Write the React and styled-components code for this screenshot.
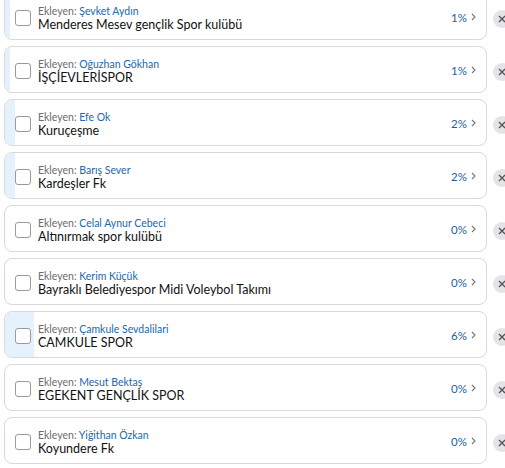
import React from "react";
import styled, { createGlobalStyle } from "styled-components";

const items = [
  { by: "Şevket Aydın", name: "Menderes Mesev gençlik Spor kulübü", pct: 1 },
  { by: "Oğuzhan Gökhan", name: "İŞÇİEVLERİSPOR", pct: 1 },
  { by: "Efe Ok", name: "Kuruçeşme", pct: 2 },
  { by: "Barış Sever", name: "Kardeşler Fk", pct: 2 },
  { by: "Celal Aynur Cebeci", name: "Altınırmak spor kulübü", pct: 0 },
  { by: "Kerim Küçük", name: "Bayraklı Belediyespor Midi Voleybol Takımı", pct: 0 },
  { by: "Çamkule Sevdalilari", name: "CAMKULE SPOR", pct: 6 },
  { by: "Mesut Bektaş", name: "EGEKENT GENÇLİK SPOR", pct: 0 },
  { by: "Yiğithan Özkan", name: "Koyundere Fk", pct: 0 },
];

const GlobalStyle = createGlobalStyle`
  html, body {
    margin: 0;
    padding: 0;
    background: #ffffff;
    overflow: hidden;
  }
  body {
    font-family: Lato, "Open Sans", sans-serif;
  }
`;

const List = styled.div`
  display: flex;
  flex-direction: column;
  gap: 6px;
  margin-top: -7px;
  padding-left: 4px;
`;

const Row = styled.div`
  display: flex;
  align-items: center;
  gap: 4px;
`;

const Card = styled.div`
  position: relative;
  flex: 0 0 483px;
  height: 47px;
  box-sizing: border-box;
  border: 1px solid #d9d9d9;
  border-radius: 8px;
  overflow: hidden;
  display: flex;
  align-items: center;
  padding: 0 10px;
  background: #fff;
`;

const Fill = styled.div`
  position: absolute;
  left: 0;
  top: 0;
  bottom: 0;
  background: #e5f1fc;
`;

const Check = styled.span`
  position: relative;
  width: 16px;
  height: 16px;
  box-sizing: border-box;
  border: 1px solid #9a9a9a;
  border-radius: 3px;
  background: #fff;
  flex: none;
  margin-top: 2px;
`;

const Info = styled.div`
  position: relative;
  display: flex;
  flex-direction: column;
  margin-left: 7px;
  margin-top: 4px;
  flex: 1;
`;

const By = styled.div`
  font-size: 10.5px;
  line-height: 11px;
  color: #6b6b6b;

  span {
    color: #2168ab;
  }
`;

const Name = styled.div`
  font-size: 12.5px;
  line-height: 15px;
  color: #111;
`;

const Pct = styled.div`
  position: relative;
  display: flex;
  align-items: center;
  gap: 4px;
  font-size: 11.5px;
  color: #1d5f9c;
  margin-top: 1px;
`;

const Remove = styled.button`
  flex: none;
  width: 18px;
  height: 18px;
  border: none;
  border-radius: 50%;
  background: #e4e4e6;
  padding: 0;
  display: flex;
  align-items: center;
  justify-content: center;
  margin-left: 2px;
  margin-top: 4px;
`;

function Chevron() {
  return (
    <svg width="5" height="8" viewBox="0 0 5 8">
      <path d="M1 1l3 3-3 3" fill="none" stroke="#777" strokeWidth="1.1" />
    </svg>
  );
}

function Cross() {
  return (
    <svg width="8" height="8" viewBox="0 0 8 8">
      <path d="M1 1l6 6M7 1L1 7" stroke="#555" strokeWidth="1.3" />
    </svg>
  );
}

export default function App() {
  return (
    <>
      <GlobalStyle />
      <List>
        {items.map((it, i) => (
          <Row key={i}>
            <Card>
              <Fill style={{ width: `${it.pct}%` }} />
              <Check />
              <Info>
                <By>
                  Ekleyen: <span>{it.by}</span>
                </By>
                <Name>{it.name}</Name>
              </Info>
              <Pct>
                {it.pct}%
                <Chevron />
              </Pct>
            </Card>
            <Remove>
              <Cross />
            </Remove>
          </Row>
        ))}
      </List>
    </>
  );
}
